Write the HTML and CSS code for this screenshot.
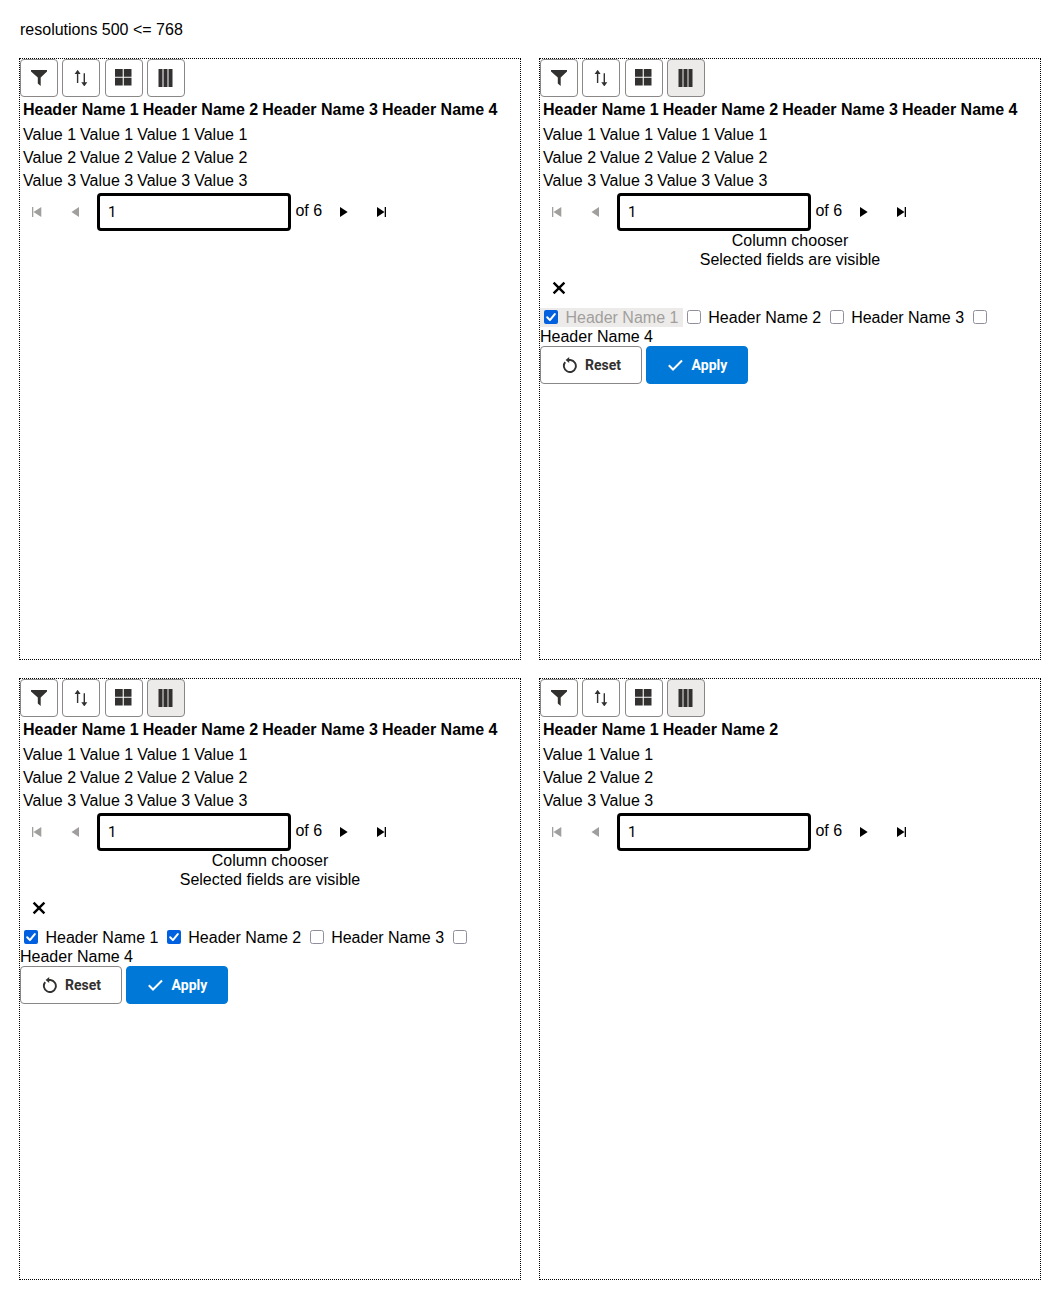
FILE: index.html
```
<!DOCTYPE html>
<html lang="en">
<head>
<meta charset="utf-8">
<title>Column chooser</title>
<link rel="stylesheet" href="styles.css">
<script src="grid.js" defer></script>
</head>
<body>
<svg class="sprite" aria-hidden="true">
  <symbol id="filter" viewBox="0 0 16 16"><path d="M0 0h16v1.6L9.7 7.5V16L6.8 13.4V7.5L0 1.6z"/></symbol>
  <symbol id="sort" viewBox="0 0 16 16"><path d="M4.6 -.2L7.6 4H5.3V13H3.9V4H1.6zM11.3 16.4L8.3 12.2h2.3V3.2h1.4v9h2.3z"/></symbol>
  <symbol id="tiles" viewBox="0 0 17 17"><path d="M0 0h7.7v7.7H0zM8.8 0h7.7v7.7H8.8zM0 8.8h7.7v7.7H0zM8.8 8.8h7.7v7.7H8.8z"/></symbol>
  <symbol id="columns" viewBox="0 0 16 18"><path d="M.5 0h4v18h-4zM5.5 0h4v18h-4zM10.5 0h4v18h-4z"/></symbol>
  <symbol id="first" viewBox="0 0 10 10"><path d="M0 0h1.3v10H0zM9.3 0v10L1.5 5z"/></symbol>
  <symbol id="prev" viewBox="0 0 10 10"><path d="M8 0v10L.5 5z"/></symbol>
  <symbol id="next" viewBox="0 0 10 10"><path d="M1 0v10L8.7 5z"/></symbol>
  <symbol id="last" viewBox="0 0 10 10"><path d="M0 0v10L7.5 5zM7.7 0H9v10H7.7z"/></symbol>
  <symbol id="close" viewBox="0 0 14 14"><path d="M1.6 1.6l10.8 10.8M12.4 1.6L1.6 12.4" fill="none" stroke="currentColor" stroke-width="2.4"/></symbol>
  <symbol id="reset" viewBox="0 0 16 16"><path d="M3.2 5.2A6 6 0 1 0 8.5 3H5.5" fill="none" stroke="currentColor" stroke-width="1.9"/><path d="M7.2 0v6L3.6 3z"/></symbol>
  <symbol id="check" viewBox="0 0 16 16"><path d="M.8 8.3l4.2 4.2L14 3.5" fill="none" stroke="currentColor" stroke-width="2"/></symbol>
  <symbol id="box-off" viewBox="0 0 14 14"><rect x=".5" y=".5" width="13" height="13" rx="2" fill="#fff" stroke="#8f8f9d"/></symbol>
  <symbol id="box-on" viewBox="0 0 14 14"><rect width="14" height="14" rx="2" fill="#0060df"/><path d="M3.2 7.3l2.7 2.8 4.9-6" fill="none" stroke="#fff" stroke-width="2" stroke-linecap="round" stroke-linejoin="round"/></symbol>
</svg>
<p class="title">resolutions 500 &lt;= 768</p>
<main class="snapshots">
  <section class="panel" data-columns="4"></section>
  <section class="panel" data-columns="4" data-chooser="1" data-locked data-active></section>
  <section class="panel" data-columns="4" data-chooser="2" data-active></section>
  <section class="panel" data-columns="2" data-active></section>
</main>
</body>
</html>
```
FILE: styles.css
```
body { margin: 0; background: #fff; color: #000; font: 16px/19px "Liberation Sans", Arial, sans-serif; }
.sprite { display: none; }
.title { margin: 0; padding: 20px 20px 0; height: 39px; }
.snapshots { display: grid; grid-template-columns: 500px 500px; grid-auto-rows: 600px; gap: 20px; padding: 0 20px 20px; }
.panel { outline: 1px dotted #000; }
.icon { fill: currentColor; flex: none; display: block; overflow: visible; }
.icon-sort { overflow: visible; }
.icon-tiles { margin: 0 1px 1px 0; }
.icon-columns { margin-right: 1px; }
.icon-first { margin-right: 5px; }
.icon-prev { margin-right: 3px; }
.icon-reset { margin-left: 1px; margin-right: -1px; }
.toolbar { display: flex; gap: 4.45px; }
.button { box-sizing: border-box; height: 38px; min-width: 38px; padding: 0; display: flex; align-items: center; justify-content: center; border: 1px solid #8a8886; border-radius: 4px; background: #fff; color: #323130; font: 700 14px/18px Roboto, sans-serif; }
.button.active { background: #edebe9; }
.button.plain { border-color: transparent; background: transparent; color: #000; }
.button.plain:disabled { color: #a19f9d; }
.button.wide { width: 102px; gap: 8px; }
.button.primary { background: #0078d7; border-color: #0078d7; color: #fff; }
.row { display: flex; gap: 2px; padding: 0 2px 2px; white-space: nowrap; }
.cell { padding: 1px; }
.row.head { padding: 2px 2px 4px; font-weight: 700; }
.pager { display: flex; align-items: center; height: 38px; }
.page { box-sizing: border-box; width: 194px; height: 38px; margin: 0 4.45px 0 1px; padding: 0 8px; border: 3px solid #000; border-radius: 4px; background: #fff; color: #000; font: 15px Roboto, sans-serif; outline: none; }
.total { margin-right: 3px; padding-bottom: 3px; }
.heading { text-align: center; }
.fields { padding-top: 1px; }
.locked { background: #edebe9; color: #a19f9d; padding: 1px 0; }
.box { display: inline-block; width: 14px; height: 14px; margin: 0 3px 0 4px; vertical-align: -1px; }
```
FILE: grid.js
```
const icon = (name, w, h = w) => `<svg class="icon icon-${name}" width="${w}" height="${h}"><use href="#${name}"/></svg>`;
const row = (text, count, cls = "") =>
  `<div class="row ${cls}">${Array.from({ length: count }, (_, i) => `<div class="cell">${text(i + 1)}</div>`).join("")}</div>`;

document.querySelectorAll(".panel").forEach((panel) => {
  const count = Number(panel.dataset.columns);
  const checked = Number(panel.dataset.chooser || 0);
  const active = "active" in panel.dataset ? "active" : "";
  const locked = "locked" in panel.dataset;
  let html = `<div class="toolbar">
    <button class="button">${icon("filter", 16)}</button>
    <button class="button">${icon("sort", 16)}</button>
    <button class="button">${icon("tiles", 17)}</button>
    <button class="button ${active}">${icon("columns", 16, 18)}</button></div>`;
  html += row((n) => `Header Name ${n}`, count, "head");
  for (let r = 1; r <= 3; r++) html += row(() => `Value ${r}`, count);
  html += `<div class="pager">
    <button class="button plain" disabled>${icon("first", 10)}</button>
    <button class="button plain" disabled>${icon("prev", 10)}</button>
    <input class="page" value="1"><span class="total">of 6</span>
    <button class="button plain">${icon("next", 10)}</button>
    <button class="button plain">${icon("last", 10)}</button></div>`;
  if (checked) {
    const labels = [1, 2, 3, 4].map((n) =>
      `<label class="${locked && n === 1 ? "locked" : ""}"><svg class="box"><use href="#box-${n <= checked ? "on" : "off"}"/></svg> Header Name ${n} </label>`);
    html += `<div class="heading">Column chooser</div><div class="heading">Selected fields are visible</div>
      <button class="button plain">${icon("close", 14)}</button>
      <div class="fields">${labels.join("")}</div>
      <div class="toolbar"><button class="button wide">${icon("reset", 16)}Reset</button>
      <button class="button wide primary">${icon("check", 16)}Apply</button></div>`;
  }
  panel.innerHTML = html;
});
```
